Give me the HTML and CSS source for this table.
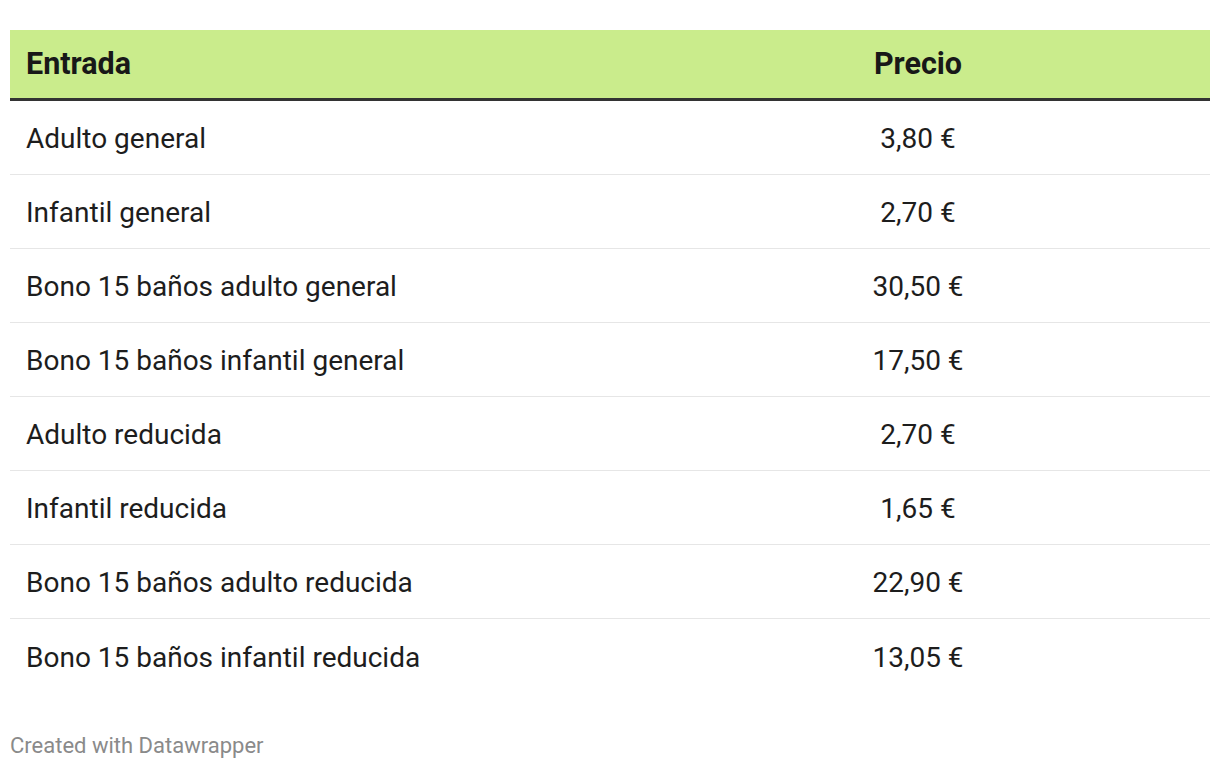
FILE: index.html
```html
<!DOCTYPE html>
<html lang="es">
<head>
<meta charset="utf-8">
<link rel="stylesheet" href="styles.css">
</head>
<body>
<div class="wrap">
  <div class="table">
    <div class="row head">
      <div class="c1">Entrada</div>
      <div class="c2">Precio</div>
    </div>
    <div class="row"><div class="c1">Adulto general</div><div class="c2">3,80 €</div></div>
    <div class="row"><div class="c1">Infantil general</div><div class="c2">2,70 €</div></div>
    <div class="row"><div class="c1">Bono 15 baños adulto general</div><div class="c2">30,50 €</div></div>
    <div class="row"><div class="c1">Bono 15 baños infantil general</div><div class="c2">17,50 €</div></div>
    <div class="row"><div class="c1">Adulto reducida</div><div class="c2">2,70 €</div></div>
    <div class="row"><div class="c1">Infantil reducida</div><div class="c2">1,65 €</div></div>
    <div class="row"><div class="c1">Bono 15 baños adulto reducida</div><div class="c2">22,90 €</div></div>
    <div class="row last"><div class="c1">Bono 15 baños infantil reducida</div><div class="c2">13,05 €</div></div>
  </div>
  <div class="footer">Created with Datawrapper</div>
</div>
</body>
</html>
```
FILE: styles.css
```css
html, body {
  margin: 0;
  padding: 0;
  background: #fff;
}
body {
  font-family: Roboto, "Liberation Sans", sans-serif;
  color: #1d1d1d;
}
.wrap {
  padding: 30px 10px 0 10px;
}
.table {
  display: flex;
  flex-direction: column;
}
.row {
  display: grid;
  grid-template-columns: 616px 1fr;
  height: 74px;
  align-items: center;
  border-bottom: 1px solid #e6e6e6;
  box-sizing: border-box;
  font-size: 28px;
  padding-top: 2px;
}
.row .c1 {
  padding-left: 16px;
}
.row .c2 {
  text-align: center;
}
.row.head {
  height: 71px;
  background: #caec8c;
  border-bottom: 3px solid #333;
  font-weight: 700;
  font-size: 30.5px;
  color: #181818;
  padding-top: 0;
  padding-bottom: 2px;
}
.row.last {
  border-bottom: none;
}
.footer {
  margin-top: 40px;
  font-size: 22px;
  color: #8a8a8a;
}
```
